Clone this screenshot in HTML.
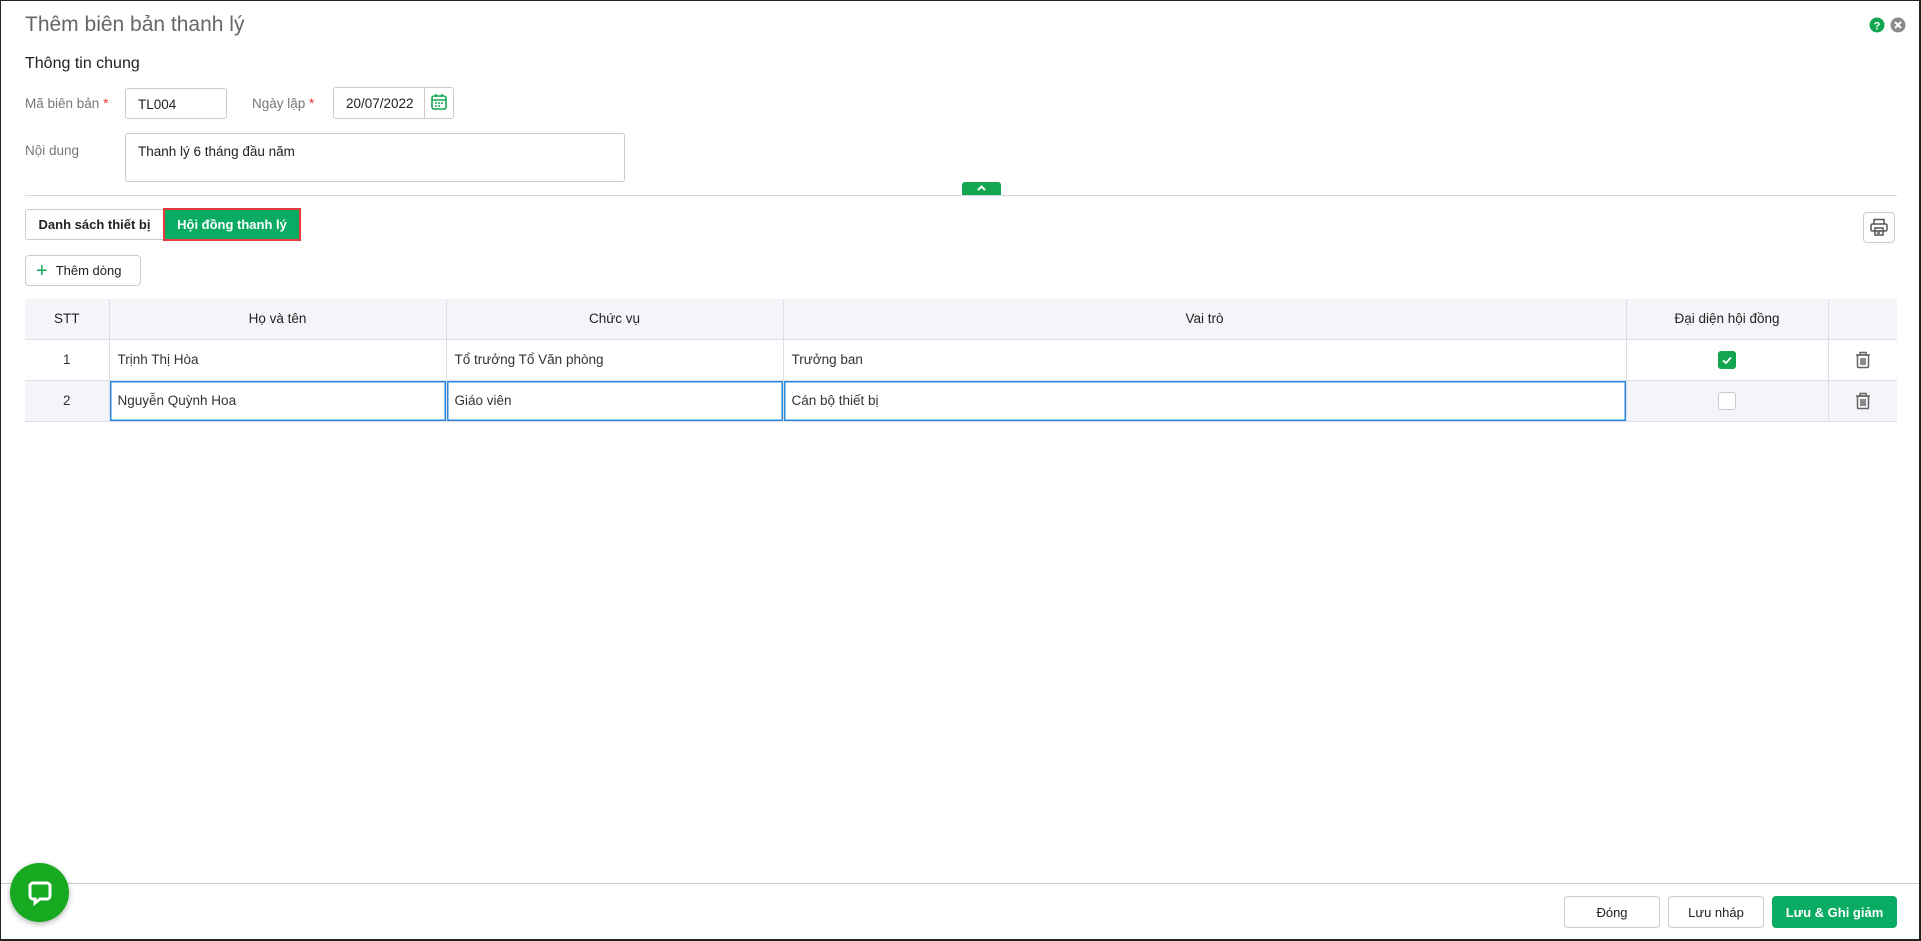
<!DOCTYPE html>
<html><head><meta charset="utf-8">
<style>
*{box-sizing:border-box;margin:0;padding:0}
html,body{width:1921px;height:941px;overflow:hidden;background:#fff;font-family:"Liberation Sans",sans-serif;color:#222}
.frame{position:absolute;left:0;top:0;width:1921px;height:941px;border:1px solid #222;border-right:2px solid #222;border-bottom:2px solid #222}
.abs{position:absolute}
.title{left:25px;top:13px;font-size:21px;color:#666}
.sub{left:25px;top:55px;font-size:16px;color:#222}
.lbl{font-size:13.5px;color:#777}
.inp{border:1px solid #ccc;border-radius:3px;background:#fff;font-size:13.5px;color:#222}
.req{color:#e33}
.tab{font-size:13px;font-weight:bold;display:flex;align-items:center;justify-content:center}
table{border-collapse:collapse;position:absolute;left:25px;top:299px;width:1872px;font-size:13.5px}
th{background:#f4f5f8;height:40px;font-weight:normal;color:#222;border-left:1px solid #dcdde6;border-bottom:1px solid #dcdde6}
td{height:41px;border-left:1px solid #dcdde6;border-bottom:1px solid #dcdde6;padding:0 8px;color:#333}
th:first-child,td:first-child{border-left:none;text-align:center}
tr.r2 td{background:#f4f5f8}
td.ed{background:#fff!important;box-shadow:inset 0 0 0 1.5px #2b8ae0}
.btn{border:1px solid #ccc;border-radius:4px;background:#fff;font-size:13px;display:flex;align-items:center;justify-content:center;color:#222}
</style></head><body>
<div class="frame"></div>
<div class="abs title">Thêm biên bản thanh lý</div>
<svg class="abs" style="left:1869px;top:17px" width="16" height="16"><circle cx="8" cy="8" r="7.5" fill="#12a650"/><text x="8" y="12.5" font-size="11" font-weight="bold" fill="#fff" text-anchor="middle" font-family="Liberation Sans">?</text></svg>
<svg class="abs" style="left:1890px;top:17px" width="16" height="16"><circle cx="8" cy="8" r="7.5" fill="#8a8a8a"/><path d="M5 5L11 11M11 5L5 11" stroke="#fff" stroke-width="2"/></svg>
<div class="abs sub">Thông tin chung</div>
<div class="abs lbl" style="left:25px;top:96px">Mã biên bản <span class="req">*</span></div>
<div class="abs inp" style="left:125px;top:88px;width:102px;height:31px;padding:8px 12px">TL004</div>
<div class="abs lbl" style="left:252px;top:96px">Ngày lập <span class="req">*</span></div>
<div class="abs inp" style="left:333px;top:87px;width:121px;height:32px;padding:8px 12px">20/07/2022</div>
<div class="abs" style="left:424px;top:88px;width:1px;height:30px;background:#ccc"></div>
<svg class="abs" style="left:430px;top:93px" width="18" height="18" viewBox="0 0 18 18"><rect x="2" y="3" width="14" height="13" rx="2" fill="none" stroke="#12a650" stroke-width="1.6"/><path d="M2 7H16M6 1V4M12 1V4" stroke="#12a650" stroke-width="1.6"/><path d="M5 10h2M8 10h2M11 10h2M5 13h2M8 13h2" stroke="#12a650" stroke-width="1.5"/></svg>
<div class="abs lbl" style="left:25px;top:143px">Nội dung</div>
<div class="abs inp" style="left:125px;top:133px;width:500px;height:49px;padding:10px 12px">Thanh lý 6 tháng đầu năm</div>
<div class="abs" style="left:25px;top:195px;width:1872px;height:1px;background:#d8d8dc"></div>
<div class="abs" style="left:962px;top:182px;width:39px;height:13px;background:#12a650;border-radius:3px 3px 0 0"></div>
<svg class="abs" style="left:975px;top:183px" width="13" height="10"><path d="M3 7L6.5 3.5L10 7" stroke="#fff" stroke-width="2" fill="none"/></svg>
<div class="abs tab" style="left:25px;top:209px;width:139px;height:31px;border:1px solid #ccc;border-radius:3px 0 0 3px;color:#222">Danh sách thiết bị</div>
<div class="abs tab" style="left:163px;top:208px;width:138px;height:33px;border:2px solid #e8393e;background:#0aab62;color:#fff">Hội đồng thanh lý</div>
<div class="abs btn" style="left:1863px;top:212px;width:32px;height:31px"></div>
<svg class="abs" style="left:1869px;top:217px" width="20" height="20" viewBox="0 0 20 20" fill="none" stroke="#555" stroke-width="1.5"><path d="M5 7V2.5h10V7"/><rect x="2" y="7" width="16" height="7" rx="1.5"/><rect x="6" y="11" width="8" height="7"/><path d="M8 14h4M8 16h3"/></svg>
<div class="abs btn" style="left:25px;top:255px;width:116px;height:31px;justify-content:flex-start;padding-left:10px"><span style="color:#12a650;font-size:20px;margin-right:8px;line-height:1">+</span>Thêm dòng</div>
<table>
<tr><th style="width:84px">STT</th><th style="width:337px">Họ và tên</th><th style="width:337px">Chức vụ</th><th style="width:843px">Vai trò</th><th style="width:202px">Đại diện hội đồng</th><th></th></tr>
<tr><td>1</td><td>Trịnh Thị Hòa</td><td>Tổ trưởng Tổ Văn phòng</td><td>Trưởng ban</td><td style="text-align:center"><span style="display:inline-block;width:18px;height:18px;background:#12a650;border-radius:3px;vertical-align:middle;position:relative"><svg width="18" height="18" style="position:absolute;left:0;top:0"><path d="M5 9.5L8 12L13 6.5" stroke="#fff" stroke-width="1.8" fill="none"/></svg></span></td><td style="text-align:center"><svg width="16" height="18" viewBox="0 0 16 18" style="vertical-align:middle" fill="none" stroke="#666" stroke-width="1.5"><path d="M1 4h14M5 4V1.5h6V4"/><rect x="2.5" y="4" width="11" height="12.5" rx="1"/><path d="M6 7v7M8 7v7M10 7v7"/></svg></td></tr>
<tr class="r2"><td>2</td><td class="ed">Nguyễn Quỳnh Hoa</td><td class="ed">Giáo viên</td><td class="ed">Cán bộ thiết bị</td><td style="text-align:center"><span style="display:inline-block;width:18px;height:18px;background:#fff;border:1px solid #ccc;border-radius:3px;vertical-align:middle"></span></td><td style="text-align:center"><svg width="16" height="18" viewBox="0 0 16 18" style="vertical-align:middle" fill="none" stroke="#666" stroke-width="1.5"><path d="M1 4h14M5 4V1.5h6V4"/><rect x="2.5" y="4" width="11" height="12.5" rx="1"/><path d="M6 7v7M8 7v7M10 7v7"/></svg></td></tr>
</table>
<div class="abs" style="left:1px;top:883px;width:1918px;height:1px;background:#ccc"></div>
<div class="abs btn" style="left:1564px;top:896px;width:96px;height:32px">Đóng</div>
<div class="abs btn" style="left:1668px;top:896px;width:96px;height:32px">Lưu nháp</div>
<div class="abs btn" style="left:1772px;top:896px;width:125px;height:32px;background:#0aab62;border-color:#0aab62;color:#fff;font-weight:bold">Lưu &amp; Ghi giảm</div>
<div class="abs" style="left:10px;top:863px;width:59px;height:59px;border-radius:50%;background:#17a91f;box-shadow:0 2px 6px rgba(0,0,0,.3)"></div>
<svg class="abs" style="left:25px;top:878px" width="30" height="30" viewBox="0 0 30 30"><path d="M8 5h14a3 3 0 0 1 3 3v10a3 3 0 0 1-3 3h-7l-5 4v-4h-2a3 3 0 0 1-3-3V8a3 3 0 0 1 3-3z" fill="none" stroke="#fff" stroke-width="3"/></svg>
</body></html>
